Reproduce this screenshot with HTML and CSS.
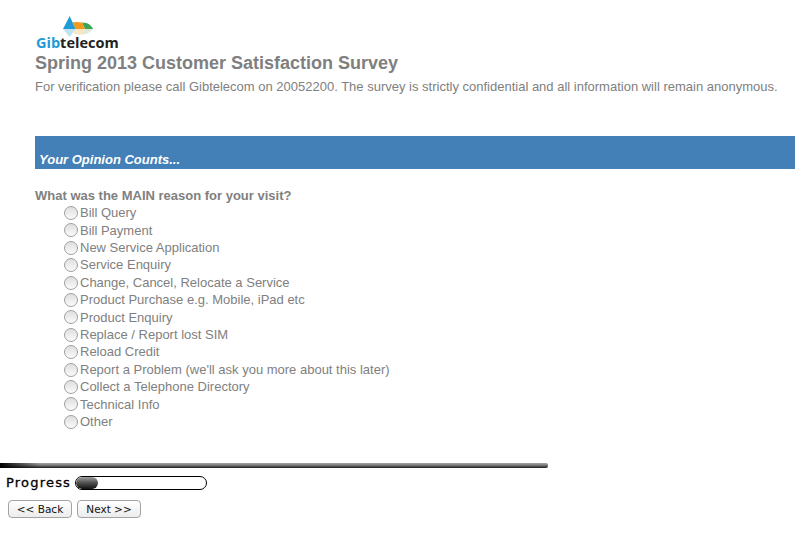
FILE: index.html
```html
<!DOCTYPE html>
<html lang="en">
<head>
<meta charset="utf-8">
<title>Spring 2013 Customer Satisfaction Survey</title>
<link rel="stylesheet" href="styles.css">
</head>
<body>
<main class="survey">
  <header class="head">
    <div class="logo">
      <svg class="logo-mark" width="30" height="21" viewBox="0 0 30 21" aria-hidden="true">
        <path d="M19 6.500 Q25 6.500 27.500 9.500 Q29.500 11 30 13 L22 13 Z" fill="#3aa655"/>
        <path d="M9.500 6.300 Q14 5.500 19 6.500 L22 13 L12.500 13 Z" fill="#f39a1c"/>
        <path d="M12.500 13 L22 13 L19 18.500 Q14 19.500 10 17 Z" fill="#fbe6c4"/>
        <path d="M22 13 L30 13 Q26 18 19 18.500 Z" fill="#dcebd6"/>
        <path d="M6.700 0 L12.500 13 L0 13 Z" fill="#1f9bd7"/>
        <path d="M0 13 L12.500 13 L6.700 21 Z" fill="#bfe3f5"/>
      </svg>
      <div class="logo-text"><span class="gib">Gib</span><span class="tel">telecom</span></div>
    </div>
    <h1 class="title">Spring 2013 Customer Satisfaction Survey</h1>
    <p class="note">For verification please call Gibtelecom on 20052200. The survey is strictly confidential and all information will remain anonymous.</p>
  </header>
  <h2 class="banner">Your Opinion Counts...</h2>
  <section class="question">
    <p class="prompt">What was the MAIN reason for your visit?</p>
    <ul class="options">
      <li class="option"><span class="radio"></span>Bill Query</li>
      <li class="option"><span class="radio"></span>Bill Payment</li>
      <li class="option"><span class="radio"></span>New Service Application</li>
      <li class="option"><span class="radio"></span>Service Enquiry</li>
      <li class="option"><span class="radio"></span>Change, Cancel, Relocate a Service</li>
      <li class="option"><span class="radio"></span>Product Purchase e.g. Mobile, iPad etc</li>
      <li class="option"><span class="radio"></span>Product Enquiry</li>
      <li class="option"><span class="radio"></span>Replace / Report lost SIM</li>
      <li class="option"><span class="radio"></span>Reload Credit</li>
      <li class="option"><span class="radio"></span>Report a Problem (we'll ask you more about this later)</li>
      <li class="option"><span class="radio"></span>Collect a Telephone Directory</li>
      <li class="option"><span class="radio"></span>Technical Info</li>
      <li class="option"><span class="radio"></span>Other</li>
    </ul>
  </section>
  <div class="rule"></div>
  <div class="progress">
    <span class="progress-label">Progress</span>
    <div class="track"><div class="fill"></div></div>
  </div>
  <div class="actions">
    <button class="btn" type="button">&lt;&lt; Back</button>
    <button class="btn" type="button">Next &gt;&gt;</button>
  </div>
</main>
</body>
</html>
```

FILE: styles.css
```css
html, body { margin: 0; padding: 0; background: #fff; }
body { font-family: "Liberation Sans", Arial, sans-serif; color: #808080; overflow: hidden; }
.survey { width: 795px; height: 539px; display: flex; flex-direction: column; }
.head { padding: 16px 0 0 35px; height: 136px; box-sizing: border-box; }
.logo { width: 84px; display: flex; flex-direction: column; align-items: flex-start; height: 36px; }
.logo-mark { display: block; margin-left: 28px; flex: none; }
.logo-text { font-family: "Open Sans", sans-serif; font-size: 14.500px; line-height: 14px; font-weight: bold; margin: -1px 0 0 1px; white-space: nowrap; }
.gib { color: #1f9bd7; }
.tel { color: #222; }
.title { margin: 0; font-size: 18px; line-height: 22px; font-weight: bold; color: #7f7f7f; }
.note { margin: 5px 0 0; font-size: 13px; line-height: 16px; white-space: nowrap; color: #808080; }
.banner { margin: 0 0 0 35px; height: 33px; box-sizing: border-box; background: #4380b8; color: #fff; font-size: 13px; line-height: 14px; font-weight: bold; font-style: italic; padding: 17px 0 0 4px; }
.question { padding: 19px 0 0 35px; }
.prompt { margin: 0; font-size: 13px; line-height: 16px; font-weight: bold; color: #808080; }
.options { list-style: none; margin: 0; padding: 0.300px 0 0 29px; }
.option { height: 17.400px; line-height: 17.400px; font-size: 13px; display: flex; align-items: center; color: #808080; white-space: nowrap; }
.radio { width: 12px; height: 12px; border: 1px solid #a0a0a0; border-radius: 50%; background: linear-gradient(#dedede, #fbfbfb); margin-right: 2px; flex: none; }
.rule { margin-top: 32.700px; width: 548px; height: 5px; border-radius: 0 2px 2px 0; background: linear-gradient(90deg, #000, transparent 40px), linear-gradient(#a5a5a5, #808080 40%, #1d1d1d); }
.progress { display: flex; align-items: center; padding: 7px 0 0 6px; height: 16px; }
.progress-label { font-family: "DejaVu Sans", sans-serif; font-size: 13px; line-height: 16px; color: #000; letter-spacing: 1.200px; -webkit-text-stroke: 0.300px #000; margin-right: 4px; }
.track { width: 132px; height: 14px; border: 1px solid #000; border-radius: 7px; background: #fff; overflow: hidden; box-sizing: border-box; }
.fill { width: 22px; height: 100%; border-radius: 6px; background: linear-gradient(#a0a0a0, #555 45%, #111); }
.actions { display: flex; gap: 5px; padding: 9px 0 0 8px; }
.btn { height: 18px; padding: 0; border: 1px solid #a3a3a3; border-radius: 4px; background: linear-gradient(#fff, #ececec); font-family: "DejaVu Sans", sans-serif; font-size: 10.500px; line-height: 14px; color: #111; width: 64px; }
```
